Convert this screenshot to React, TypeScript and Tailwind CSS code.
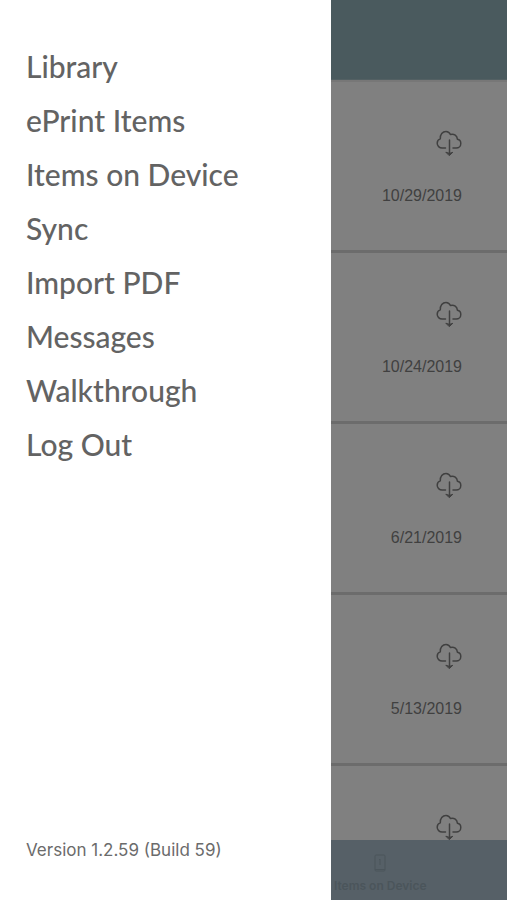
const menu = ['Library', 'ePrint Items', 'Items on Device', 'Sync', 'Import PDF', 'Messages', 'Walkthrough', 'Log Out'];
const dates = ['10/29/2019', '10/24/2019', '6/21/2019', '5/13/2019', ''];

function CloudDownload() {
  return (
    <svg width="26" height="26" viewBox="0 0 26 26" fill="none" stroke="currentColor" strokeWidth="1.5" strokeLinecap="round" strokeLinejoin="round" aria-hidden="true">
      <path d="M9.5 18H6.2C3.3 18 1.2 15.8 1.2 13.3C1.2 11 2.6 9.4 4.3 8.9C3.9 4.6 6.6 1.4 10 1.4C12.1 1.4 13.6 2.5 14.4 4.5C18.2 3.5 21.2 5.7 21.4 9.3C23.6 9.7 24.8 11.3 24.8 13.4C24.8 16 22.8 18 20.2 18H17" />
      <path d="M13.5 10V24" />
      <path d="M10.2 22.3L13.5 23.4L16.8 22.3L13.5 25.4Z" fill="currentColor" strokeWidth="1" />
    </svg>
  );
}

function Row({ date }: { date: string }) {
  return (
    <li className="flex h-[171px] shrink-0 flex-col items-end border-b-3 border-[#6c6c6c] pt-12 pr-[45px]">
      <button type="button" aria-label="Download" className="h-[26px] w-[26px] text-[#404040]">
        <CloudDownload />
      </button>
      {date && <time className="mt-7 text-base leading-6 text-[#404040]">{date}</time>}
    </li>
  );
}

export default function App() {
  return (
    <div className="relative flex h-screen flex-col overflow-hidden bg-[#808080] font-['Liberation_Sans',Arial,sans-serif]">
      <header className="h-20 shrink-0 border-b border-[#536063] bg-[#4a5a5e]" />
      <ul className="min-h-0 flex-1 overflow-hidden border-t-2 border-[#777777]">
        {dates.map((date, i) => (
          <Row key={i} date={date} />
        ))}
      </ul>
      <nav className="flex h-[60px] shrink-0 justify-end bg-[#566067]">
        <button type="button" className="flex w-1/2 flex-col items-center pt-[14px] text-[#4b555b]">
          <svg width="12" height="18" viewBox="0 0 12 18" fill="none" stroke="currentColor" aria-hidden="true">
            <rect x="1" y="1" width="10" height="16" rx="1" />
            <path d="M1 15.5H11M6 5V11M5 6L6 5" />
          </svg>
          <span className="mt-1 font-['Inter',sans-serif] text-xs leading-5 font-semibold">Items on Device</span>
        </button>
      </nav>
      <aside className="absolute inset-y-0 left-0 flex w-[65.3%] flex-col justify-between bg-white px-[26px] pt-[39px] pb-[38px]">
        <nav className="flex flex-col items-start">
          {menu.map((item) => (
            <a key={item} href="#" className="font-['Lato',sans-serif] text-[30px] leading-[54px] font-medium whitespace-nowrap text-[#636363]">
              {item}
            </a>
          ))}
        </nav>
        <p className="font-['Inter',sans-serif] text-[17px] leading-6 text-[#6b6b6b]">Version 1.2.59 (Build 59)</p>
      </aside>
    </div>
  );
}
